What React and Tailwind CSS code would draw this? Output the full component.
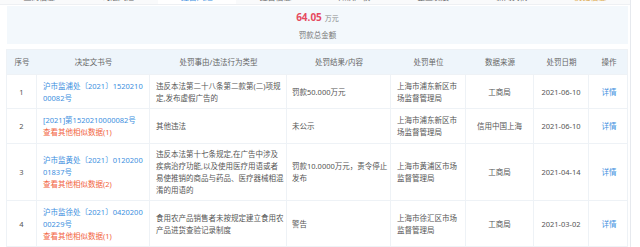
import React from 'react';

const tabs = ['工商信息', '司法风险', '经营风险', '经营信息', '知识产权', '企业发展', '新闻舆情', '历史信息'];

const rows = [
  {
    no: '1',
    doc: ['沪市监浦处〔2021〕1520210', '00082号'],
    more: null,
    reason: ['违反本法第二十八条第二款第(二)项规', '定,发布虚假广告的'],
    result: ['罚款50.000万元'],
    unit: ['上海市浦东新区市', '场监督管理局'],
    source: '工商局',
    date: '2021-06-10',
    h: 'h-[34px]',
  },
  {
    no: '2',
    doc: ['[2021]第1520210000082号'],
    more: '查看其他相似数据(1)',
    reason: ['其他违法'],
    result: ['未公示'],
    unit: ['上海市浦东新区市', '场监督管理局'],
    source: '信用中国上海',
    date: '2021-06-10',
    h: 'h-[35px]',
  },
  {
    no: '3',
    doc: ['沪市监黄处〔2021〕0120200', '01837号'],
    more: '查看其他相似数据(2)',
    reason: ['违反本法第十七条规定,在广告中涉及', '疾病治疗功能,以及使用医疗用语或者', '易使推销的商品与药品、医疗器械相混', '淆的用语的'],
    result: ['罚款10.0000万元，责令停止', '发布'],
    unit: ['上海市黄浦区市场', '监督管理局'],
    source: '工商局',
    date: '2021-04-14',
    h: 'h-[57px]',
  },
  {
    no: '4',
    doc: ['沪市监徐处〔2021〕0420200', '00229号'],
    more: '查看其他相似数据(1)',
    reason: ['食用农产品销售者未按规定建立食用农', '产品进货查验记录制度'],
    result: ['警告'],
    unit: ['上海市徐汇区市场', '监督管理局'],
    source: '工商局',
    date: '2021-03-02',
    h: 'h-[46px]',
  },
];

const cols = 'grid grid-cols-[30px_113px_137px_104px_75px_68px_55px_40px]';

const Lines = ({ lines, className = '' }) => (
  <div className={className}>
    {lines.map((l) => (
      <div key={l} className="whitespace-nowrap">{l}</div>
    ))}
  </div>
);

export default function App() {
  return (
    <div className="w-[640px] h-[247px] overflow-hidden bg-white font-['Noto_Sans','Noto_Sans_CJK_SC',sans-serif]">
      <div className="w-[631px] h-full border-r border-[#e6e9ee] flex flex-col">
        {/* tab strip, mostly scrolled off */}
        <div className="mt-[-14px] h-[20px] flex bg-[#f9fafb] border-b border-[#eef0f3] text-[8px] leading-[10px] text-[#666]">
          {tabs.map((t, i) => (
            <div
              key={t}
              className={
                'w-[79px] flex items-end justify-center pb-[2px] ' +
                (i === 2 ? 'bg-white text-[#3d8fe0]' : i === 7 ? 'text-[#d9a441]' : '')
              }
            >
              {t}
            </div>
          ))}
        </div>

        <div className="pl-[7px] pr-[2px] pt-[1px]">
          {/* total */}
          <div className="h-[38px] bg-[#f3f8fc] flex flex-col items-center justify-center">
            <div className="flex items-baseline gap-[3px] leading-[14px]">
              <span className="text-[10px] font-bold text-[#e64a5f]">64.05</span>
              <span className="text-[7px] text-[#888]">万元</span>
            </div>
            <div className="mt-[4px] text-[7.5px] leading-[10px] text-[#777]">罚款总金额</div>
          </div>

          {/* table */}
          <div className="mt-[5px] ml-[-1px] border border-[#eef2f6] text-[7.5px] leading-[12px] text-[#555]">
            <div className={cols + ' h-[24px] bg-[#eef5fb] text-[#666] items-center text-center'}>
              <div>序号</div>
              <div>决定文书号</div>
              <div>处罚事由/违法行为类型</div>
              <div>处罚结果/内容</div>
              <div>处罚单位</div>
              <div>数据来源</div>
              <div>处罚日期</div>
              <div>操作</div>
            </div>
            {rows.map((r) => (
              <div key={r.no} className={cols + ' ' + r.h + ' border-t border-[#eef2f6]'}>
                <div className="flex items-center justify-center border-r border-[#eef2f6]">{r.no}</div>
                <div className="flex flex-col justify-center px-[6px] border-r border-[#eef2f6]">
                  <Lines lines={r.doc} className="text-[#3d8fe0]" />
                  {r.more && <div className="whitespace-nowrap text-[#f2643f]">{r.more}</div>}
                </div>
                <div className="flex items-center px-[6px] border-r border-[#eef2f6]">
                  <Lines lines={r.reason} />
                </div>
                <div className="flex items-center px-[5px] border-r border-[#eef2f6] overflow-hidden">
                  <Lines lines={r.result} />
                </div>
                <div className="flex items-center px-[6px] border-r border-[#eef2f6]">
                  <Lines lines={r.unit} />
                </div>
                <div className="flex items-center justify-center border-r border-[#eef2f6]">{r.source}</div>
                <div className="flex items-center justify-center border-r border-[#eef2f6]">{r.date}</div>
                <div className="flex items-center justify-center text-[#3d8fe0]">详情</div>
              </div>
            ))}
          </div>
        </div>
      </div>
    </div>
  );
}
